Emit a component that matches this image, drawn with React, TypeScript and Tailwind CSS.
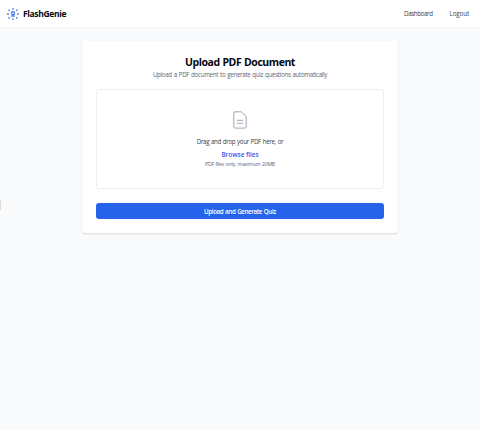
function Logo() {
  return (
    <svg className="h-3 w-3 shrink-0" viewBox="0 0 12 12" fill="#4a7df5">
      <rect x="5.2" y="0" width="1.5" height="1.5" rx=".3" />
      <rect x="5.2" y="10.5" width="1.5" height="1.5" rx=".3" />
      <rect x="0" y="5.3" width="1.9" height="1.4" rx=".3" />
      <rect x="10.1" y="5.3" width="1.9" height="1.4" rx=".3" />
      <rect x="1.3" y="1.4" width="1.6" height="1.6" rx=".4" />
      <rect x="9.1" y="1.4" width="1.6" height="1.6" rx=".4" />
      <rect x="1.3" y="9.1" width="1.6" height="1.6" rx=".4" />
      <rect x="9.1" y="9.1" width="1.6" height="1.6" rx=".4" />
      <circle cx="6" cy="5.2" r="1.5" fill="none" stroke="#3b70f0" strokeWidth="1.2" />
      <path d="M5.3 6h1.4v1.2h1v1.5H4.3V7.2h1z" />
    </svg>
  );
}

function DocumentIcon() {
  return (
    <svg className="h-[18px] w-[14px]" viewBox="0 0 14 18" fill="none" stroke="#a0a5b5" strokeWidth="1" strokeLinecap="round" strokeLinejoin="round">
      <path d="M2.2 .8H8.3L13.2 5.6V15.4Q13.2 17.1 11.5 17.1H2.5Q.8 17.1 .8 15.4V2.3Q.8 .8 2.2 .8ZM4.3 9.3H9.7M4.3 12.3H9.7" />
    </svg>
  );
}

export default function App() {
  return (
    <div className="flex h-[430px] w-[480px] flex-col overflow-hidden bg-[#f9fafc] font-['Open_Sans','Noto_Sans',sans-serif] whitespace-nowrap">
      <header className="flex h-[28px] shrink-0 items-center justify-between border-b border-[#f5f6f8] bg-white pr-[11px] pl-[7px]">
        <div className="flex items-center gap-1">
          <Logo />
          <span className="pt-px text-[8.5px] leading-3 font-bold tracking-[-0.35px] text-[#030712]">FlashGenie</span>
        </div>
        <nav className="flex items-center gap-[17px] pt-px text-[6.2px] leading-3 text-[#374151]">
          <a className="tracking-[-0.38px]">Dashboard</a>
          <a className="tracking-[-0.1px]">Logout</a>
        </nav>
      </header>
      <div className="flex flex-1 items-start">
        <div className="mt-[172px] h-[10px] w-px bg-[#dddddd]" />
        <main className="mt-[13px] ml-[81px] flex h-[192px] w-[316px] flex-col items-center rounded-[4px] bg-white px-[14px] pt-[14px] shadow-[0_1px_2px_rgba(0,0,0,0.12)]">
          <h1 className="text-[10.5px] leading-[14px] font-bold tracking-[-0.46px] text-[#030712] [word-spacing:0.6px]">Upload PDF Document</h1>
          <p className="text-[6.2px] leading-[12px] tracking-[-0.31px] text-[#5f6775] [word-spacing:0.6px]">Upload a PDF document to generate quiz questions automatically</p>
          <section className="mt-[8px] flex h-[100px] w-full shrink-0 flex-col items-center rounded-[4px] border border-dotted border-[#dadde2] pt-[21px]">
            <DocumentIcon />
            <p className="mt-[7px] text-[6.2px] leading-[12px] tracking-[-0.34px] text-[#374151] [word-spacing:0.5px]">Drag and drop your PDF here, or</p>
            <button className="text-[6.5px] leading-[13px] font-semibold tracking-[-0.05px] text-[#2f5eea]">Browse files</button>
            <p className="text-[5.2px] leading-[7px] tracking-[-0.24px] text-[#5f6775] [word-spacing:0.5px]">PDF files only, maximum 20MB</p>
          </section>
          <button className="mt-[14px] h-[16px] w-full shrink-0 rounded-[3px] bg-[#2563eb] text-[6.2px] leading-[17px] font-semibold tracking-[-0.36px] text-white [word-spacing:0.5px]">Upload and Generate Quiz</button>
        </main>
      </div>
    </div>
  );
}
